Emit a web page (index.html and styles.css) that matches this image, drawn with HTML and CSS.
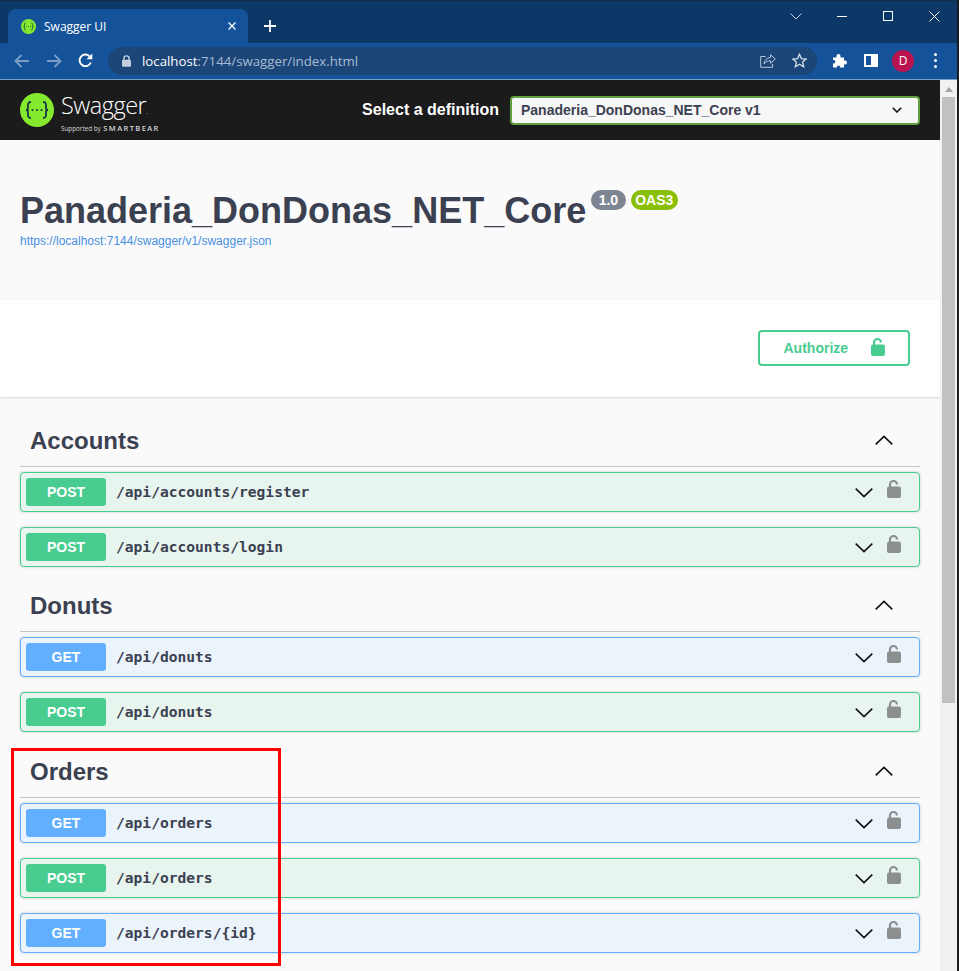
FILE: index.html
```html
<!DOCTYPE html>
<html lang="en">
<head>
    <meta charset="UTF-8">
    <meta name="viewport" content="width=device-width, initial-scale=1.0">
    <title>Swagger UI</title>
    <link rel="stylesheet" href="styles.css">
</head>
<body>
    <svg class="defs" width="0" height="0">
        <symbol id="lock" viewBox="0 0 14 18">
            <path d="M3 8V4.500a3.500 3.500 0 0 1 7 0" fill="none" stroke="currentColor" stroke-width="2.200"/>
            <rect x="0" y="6.500" width="14" height="11.500" rx="2" fill="currentColor"/>
        </symbol>
        <symbol id="down" viewBox="0 0 18 10">
            <path d="M0.700 0.700L9 8.700L17.300 0.700" fill="none" stroke="#111" stroke-width="1.600"/>
        </symbol>
        <symbol id="up" viewBox="0 0 18 10">
            <path d="M0.700 9.300L9 1.300L17.300 9.300" fill="none" stroke="#111" stroke-width="1.600"/>
        </symbol>
        <symbol id="braces" viewBox="0 0 34 34">
            <circle cx="17" cy="17" r="17" fill="#85ea2d"/>
            <path d="M11 9c-3 0-3 1.500-3 3.500v2.500c0 1.500-1 2-2 2c1 0 2 .5 2 2v2.500c0 2 0 3.500 3 3.500M23 9c3 0 3 1.500 3 3.500v2.500c0 1.500 1 2 2 2c-1 0-2 .5-2 2v2.500c0 2 0 3.500-3 3.500" fill="none" stroke="#173647" stroke-width="1.800"/>
            <circle cx="12.500" cy="17" r="1.100" fill="#173647"/>
            <circle cx="17" cy="17" r="1.100" fill="#173647"/>
            <circle cx="21.500" cy="17" r="1.100" fill="#173647"/>
        </symbol>
    </svg>

    <div class="tabstrip">
        <div class="tab">
            <svg class="favicon" width="15" height="15"><use href="#braces"/></svg>
            <span class="tab-title">Swagger UI</span>
            <svg class="tab-close" width="8" height="8" viewBox="0 0 8 8"><path d="M0.500 0.500L7.500 7.500M7.500 0.500L0.500 7.500" stroke="#fff" stroke-width="1.300"/></svg>
        </div>
        <svg class="new-tab" width="12" height="12" viewBox="0 0 12 12"><path d="M6 0V12M0 6H12" stroke="#fff" stroke-width="1.800"/></svg>
        <div class="window-btns">
            <svg width="12" height="7" viewBox="0 0 12 7"><path d="M0.500 0.500L6 6L11.500 0.500" fill="none" stroke="#c6d3e2" stroke-width="1"/></svg>
            <svg width="10" height="10" viewBox="0 0 10 10"><path d="M0 5.500H10" stroke="#fff" stroke-width="1"/></svg>
            <svg width="10" height="10" viewBox="0 0 10 10"><rect x="0.500" y="0.500" width="9" height="9" fill="none" stroke="#fff" stroke-width="1"/></svg>
            <svg width="11" height="11" viewBox="0 0 11 11"><path d="M0.500 0.500L10.500 10.500M10.500 0.500L0.500 10.500" stroke="#fff" stroke-width="1"/></svg>
        </div>
    </div>

    <div class="toolbar">
        <svg class="nav-icon" width="16" height="14" viewBox="0 0 16 14"><path d="M15 7H2M7.500 1L1.500 7L7.500 13" fill="none" stroke="#7c9dc6" stroke-width="1.800"/></svg>
        <svg class="nav-icon" width="16" height="14" viewBox="0 0 16 14"><path d="M1 7H14M8.500 1L14.500 7L8.500 13" fill="none" stroke="#7c9dc6" stroke-width="1.800"/></svg>
        <svg class="nav-icon" width="15" height="15" viewBox="0 0 15 15"><path d="M12.800 9.500A5.800 5.800 0 1 1 11.500 3.200" fill="none" stroke="#fff" stroke-width="1.900"/><path d="M14.300 0.500V6.300H8.500Z" fill="#fff"/></svg>
        <div class="omnibox">
            <svg class="url-lock" width="9" height="12" viewBox="0 0 14 18"><path d="M3 8V5a4 4 0 0 1 8 0v3" fill="none" stroke="#c3cfde" stroke-width="2.200"/><rect y="7" width="14" height="11" rx="2" fill="#c3cfde"/></svg>
            <span class="url"><span class="url-host">localhost</span>:7144/swagger/index.html</span>
            <svg class="share" width="16" height="14" viewBox="0 0 16 14"><path d="M10.500 0.800L15.300 5L10.500 9.200V6.800C7.500 6.800 5.500 7.800 4 10C4.500 6.500 6.500 3.800 10.500 3.300ZM5.500 2.500H0.700V13.300H12.500V10" fill="none" stroke="#b7c6d9" stroke-width="1"/></svg>
            <svg class="star" width="15" height="15" viewBox="0 0 15 15"><path d="M7.500 1.200L9.400 5.600L14.200 6L10.600 9.100L11.700 13.800L7.500 11.300L3.300 13.800L4.400 9.100L0.800 6L5.600 5.600Z" fill="none" stroke="#d5deea" stroke-width="1.300"/></svg>
        </div>
        <svg class="puzzle" width="15" height="15" viewBox="0 0 15 15"><path d="M1 4.500H4.500V3A2 2 0 0 1 8.500 3V4.500H12V7.500H13A2 2 0 0 1 13 11.500H12V14.500H8V13.500A1.700 1.700 0 0 0 5 13.500V14.500H1V10.500H2A1.800 1.800 0 0 0 2 7H1Z" fill="#fff"/></svg>
        <div class="sidepanel"></div>
        <div class="avatar">D</div>
        <div class="kebab"><i></i><i></i><i></i></div>
    </div>

    <div class="viewport">
        <div class="page">
            <div class="topbar">
                <div class="logo">
                    <svg width="34" height="34"><use href="#braces"/></svg>
                    <div class="logo-text">
                        <div class="logo-name">Swagger<small>.</small></div>
                        <div class="logo-sub">Supported by <b>SMARTBEAR</b></div>
                    </div>
                </div>
                <div class="definition">
                    <span class="definition-label">Select a definition</span>
                    <div class="select">
                        <span>Panaderia_DonDonas_NET_Core v1</span>
                        <svg width="10" height="6" viewBox="0 0 10 6"><path d="M0.800 0.800L5 5L9.200 0.800" fill="none" stroke="#111" stroke-width="1.600"/></svg>
                    </div>
                </div>
            </div>

            <div class="info">
                <div class="title-row">
                    <h1>Panaderia_DonDonas_NET_Core</h1>
                    <span class="badge version">1.0</span>
                    <span class="badge oas">OAS3</span>
                </div>
                <a class="spec-link" href="#">https://localhost:7144/swagger/v1/swagger.json</a>
            </div>

            <div class="schemes">
                <div class="authorize">
                    <span>Authorize</span>
                    <svg class="authorize-lock" width="14" height="18"><use href="#lock"/></svg>
                </div>
            </div>

            <div class="ops">
                <section class="tag">
                    <div class="tag-head">
                        <h2>Accounts</h2>
                        <svg class="tag-arrow" width="18" height="10"><use href="#up"/></svg>
                    </div>
                    <div class="op post">
                        <span class="method">POST</span><span class="path">/api/accounts/register</span>
                        <svg class="chev" width="18" height="10"><use href="#down"/></svg>
                        <svg class="op-lock" width="14" height="18"><use href="#lock"/></svg>
                    </div>
                    <div class="op post">
                        <span class="method">POST</span><span class="path">/api/accounts/login</span>
                        <svg class="chev" width="18" height="10"><use href="#down"/></svg>
                        <svg class="op-lock" width="14" height="18"><use href="#lock"/></svg>
                    </div>
                </section>

                <section class="tag">
                    <div class="tag-head">
                        <h2>Donuts</h2>
                        <svg class="tag-arrow" width="18" height="10"><use href="#up"/></svg>
                    </div>
                    <div class="op get">
                        <span class="method">GET</span><span class="path">/api/donuts</span>
                        <svg class="chev" width="18" height="10"><use href="#down"/></svg>
                        <svg class="op-lock" width="14" height="18"><use href="#lock"/></svg>
                    </div>
                    <div class="op post">
                        <span class="method">POST</span><span class="path">/api/donuts</span>
                        <svg class="chev" width="18" height="10"><use href="#down"/></svg>
                        <svg class="op-lock" width="14" height="18"><use href="#lock"/></svg>
                    </div>
                </section>

                <section class="tag">
                    <div class="tag-head">
                        <h2>Orders</h2>
                        <svg class="tag-arrow" width="18" height="10"><use href="#up"/></svg>
                    </div>
                    <div class="op get">
                        <span class="method">GET</span><span class="path">/api/orders</span>
                        <svg class="chev" width="18" height="10"><use href="#down"/></svg>
                        <svg class="op-lock" width="14" height="18"><use href="#lock"/></svg>
                    </div>
                    <div class="op post">
                        <span class="method">POST</span><span class="path">/api/orders</span>
                        <svg class="chev" width="18" height="10"><use href="#down"/></svg>
                        <svg class="op-lock" width="14" height="18"><use href="#lock"/></svg>
                    </div>
                    <div class="op get">
                        <span class="method">GET</span><span class="path">/api/orders/{id}</span>
                        <svg class="chev" width="18" height="10"><use href="#down"/></svg>
                        <svg class="op-lock" width="14" height="18"><use href="#lock"/></svg>
                    </div>
                </section>
            </div>
        </div>

        <div class="scrollbar">
            <div class="scroll-arrow"></div>
            <div class="scroll-thumb"></div>
        </div>
    </div>

    <div class="highlight"></div>
</body>
</html>
```

FILE: styles.css
```css
html, body {
    margin: 0;
    height: 971px;
    overflow: hidden;
}

body {
    position: relative;
    box-sizing: border-box;
    font-family: "Liberation Sans", Arial, sans-serif;
    background-color: #fafafa;
    border-right: 2px solid #1c1c1c;
}

h1, h2 {
    margin: 0;
}

.defs {
    display: block;
    height: 0;
}

/* browser window */
.tabstrip {
    display: flex;
    align-items: flex-end;
    height: 43px;
    box-sizing: border-box;
    padding-left: 8px;
    background-color: #0c3766;
    border-top: 1px solid #142c4c;
}

.tab {
    display: flex;
    align-items: center;
    width: 240px;
    height: 34px;
    box-sizing: border-box;
    padding: 0 12px;
    background-color: #14539a;
    border-radius: 8px 8px 0 0;
}

.favicon {
    margin-left: 1px;
}

.tab-title {
    margin-left: 8px;
    flex: 1;
    color: #fff;
    font-family: "Open Sans", sans-serif;
    font-size: 12px;
}

.new-tab {
    margin: 0 0 11px 16px;
}

.window-btns {
    display: flex;
    align-items: center;
    gap: 36px;
    margin-left: auto;
    margin-right: 17px;
    height: 30px;
    align-self: flex-start;
}

.window-btns svg:first-child {
    margin-right: -1px;
}

.toolbar {
    display: flex;
    align-items: center;
    height: 37px;
    box-sizing: border-box;
    padding-left: 14px;
    padding-bottom: 1px;
    background-color: #14539a;
    border-bottom: 1px solid #7b9fcb;
}

.nav-icon {
    margin-right: 16px;
}

.omnibox {
    display: flex;
    align-items: center;
    width: 709px;
    height: 28px;
    box-sizing: border-box;
    margin-left: -1px;
    padding: 0 10px 0 14px;
    background-color: #1c4578;
    border-radius: 14px;
}

.url {
    margin-left: 11px;
    flex: 1;
    color: #a9bcd3;
    font-family: "Open Sans", sans-serif;
    font-size: 13.25px;
}

.url-host {
    color: #fff;
}

.share {
    margin-right: 16px;
}

.puzzle {
    margin-left: 15px;
}

.sidepanel {
    width: 14px;
    height: 13px;
    box-sizing: border-box;
    margin-left: 17px;
    background-color: #14539a;
    border: 2px solid #fff;
    border-right-width: 7px;
}

.avatar {
    width: 22px;
    height: 22px;
    margin-left: 14px;
    border-radius: 50%;
    background-color: #b9144f;
    color: #fff;
    font-family: "Open Sans", sans-serif;
    font-size: 12px;
    line-height: 22px;
    text-align: center;
}

.kebab {
    display: flex;
    flex-direction: column;
    gap: 3px;
    margin-left: 20px;
}

.kebab i {
    display: block;
    width: 3px;
    height: 3px;
    border-radius: 50%;
    background-color: #fff;
}

/* page area */
.viewport {
    display: flex;
    height: 891px;
}

.page {
    width: 940px;
    flex-shrink: 0;
    background-color: #fafafa;
}

.scrollbar {
    width: 17px;
    background-color: #f1f1f1;
}

.scroll-arrow {
    width: 0;
    height: 0;
    margin: 7px auto 5px;
    border-left: 4px solid transparent;
    border-right: 4px solid transparent;
    border-bottom: 5px solid #a3a3a3;
}

.scroll-thumb {
    width: 13px;
    height: 606px;
    margin: 0 auto;
    background-color: #c1c1c1;
}

.topbar {
    display: flex;
    align-items: center;
    justify-content: space-between;
    height: 60px;
    box-sizing: border-box;
    padding: 0 20px;
    background-color: #1b1b1b;
}

.logo {
    display: flex;
    align-items: center;
    gap: 7px;
    color: #fff;
}

.logo-text {
    font-family: "Open Sans", sans-serif;
    margin-top: 6px;
}

.logo-name {
    font-size: 23.5px;
    font-weight: 300;
    line-height: 25px;
    letter-spacing: -0.5px;
}

.logo-name small {
    font-size: 8px;
}

.logo-sub {
    font-size: 6.3px;
    line-height: 10px;
    color: #d8d8d8;
}

.logo-sub b {
    margin-left: 1px;
    font-size: 7.5px;
    font-weight: 600;
    letter-spacing: 1.4px;
}

.definition {
    display: flex;
    align-items: center;
    gap: 11px;
}

.definition-label {
    color: #fff;
    font-size: 16px;
    font-weight: bold;
}

.select {
    display: flex;
    align-items: center;
    justify-content: space-between;
    width: 410px;
    height: 29px;
    box-sizing: border-box;
    padding: 0 16px 0 9px;
    background-color: #f7f7f7;
    border: 2px solid #62a03f;
    border-radius: 4px;
    color: #3b4151;
    font-size: 14px;
    font-weight: bold;
}

.info {
    height: 160px;
    box-sizing: border-box;
    padding: 50px 20px 0;
}

.title-row {
    display: flex;
    align-items: flex-start;
}

h1 {
    color: #3b4151;
    font-size: 36px;
    line-height: 41px;
    font-weight: bold;
}

.badge {
    height: 20px;
    box-sizing: border-box;
    margin-left: 5px;
    padding: 0 7.5px;
    border-radius: 10px;
    color: #fff;
    font-size: 14px;
    font-weight: bold;
    line-height: 20px;
}

.version {
    background-color: #7d8492;
}

.oas {
    padding: 0 4.5px;
    background-color: #89bf04;
}

.spec-link {
    display: block;
    margin-top: 3px;
    color: #4990e2;
    font-size: 12px;
    line-height: 14px;
    text-decoration: none;
}

.schemes {
    display: flex;
    justify-content: flex-end;
    height: 97px;
    box-sizing: border-box;
    padding: 30px 30px 0 0;
    background-color: #fff;
    box-shadow: 0 1px 2px 0 rgba(0, 0, 0, 0.15);
}

.authorize {
    display: flex;
    align-items: center;
    justify-content: space-between;
    width: 152px;
    height: 36px;
    box-sizing: border-box;
    padding: 0 23px 0 23.5px;
    border: 2px solid #49cc90;
    border-radius: 4px;
    color: #49cc90;
    font-size: 14px;
    font-weight: bold;
}

.authorize-lock {
    margin-top: -2px;
}

.ops {
    padding: 20px 20px 0;
}

.tag {
    margin-bottom: 15px;
}

.tag:nth-child(2) {
    margin-bottom: 16px;
}

.tag-head {
    display: flex;
    align-items: center;
    justify-content: space-between;
    height: 50px;
    box-sizing: border-box;
    padding: 0 27px 2px 10px;
    border-bottom: 1px solid #c4c4c8;
    margin-bottom: 5px;
}

.tag-arrow {
    margin-bottom: 2px;
}

h2 {
    color: #3b4151;
    font-size: 24px;
    font-weight: bold;
}

.op {
    display: flex;
    align-items: center;
    height: 40px;
    box-sizing: border-box;
    margin-bottom: 15px;
    padding: 0 18px 0 5px;
    border: 1px solid;
    border-radius: 4px;
    box-shadow: 0 0 3px rgba(0, 0, 0, 0.19);
}

.op:last-child {
    margin-bottom: 0;
}

.post {
    background-color: #e8f5ef;
    border-color: #49cc90;
}

.post .method {
    background-color: #49cc90;
}

.get {
    background-color: #ebf3fb;
    border-color: #61affe;
}

.get .method {
    background-color: #61affe;
}

.method {
    width: 80px;
    height: 28px;
    border-radius: 3px;
    color: #fff;
    font-size: 14px;
    font-weight: bold;
    line-height: 28px;
    text-align: center;
}

.path {
    flex: 1;
    margin: 0 0 2px 10px;
    color: #3b4151;
    font-family: "DejaVu Sans Mono", monospace;
    font-size: 14.6px;
    font-weight: bold;
}

.chev {
    margin-top: 1px;
}

.op-lock {
    margin: -6px 0 0 14px;
    color: #8b8f8f;
}

/* red box drawn on the screenshot */
.highlight {
    position: absolute;
    left: 11px;
    top: 748px;
    width: 264px;
    height: 212px;
    border: 3px solid #f00;
}
```
